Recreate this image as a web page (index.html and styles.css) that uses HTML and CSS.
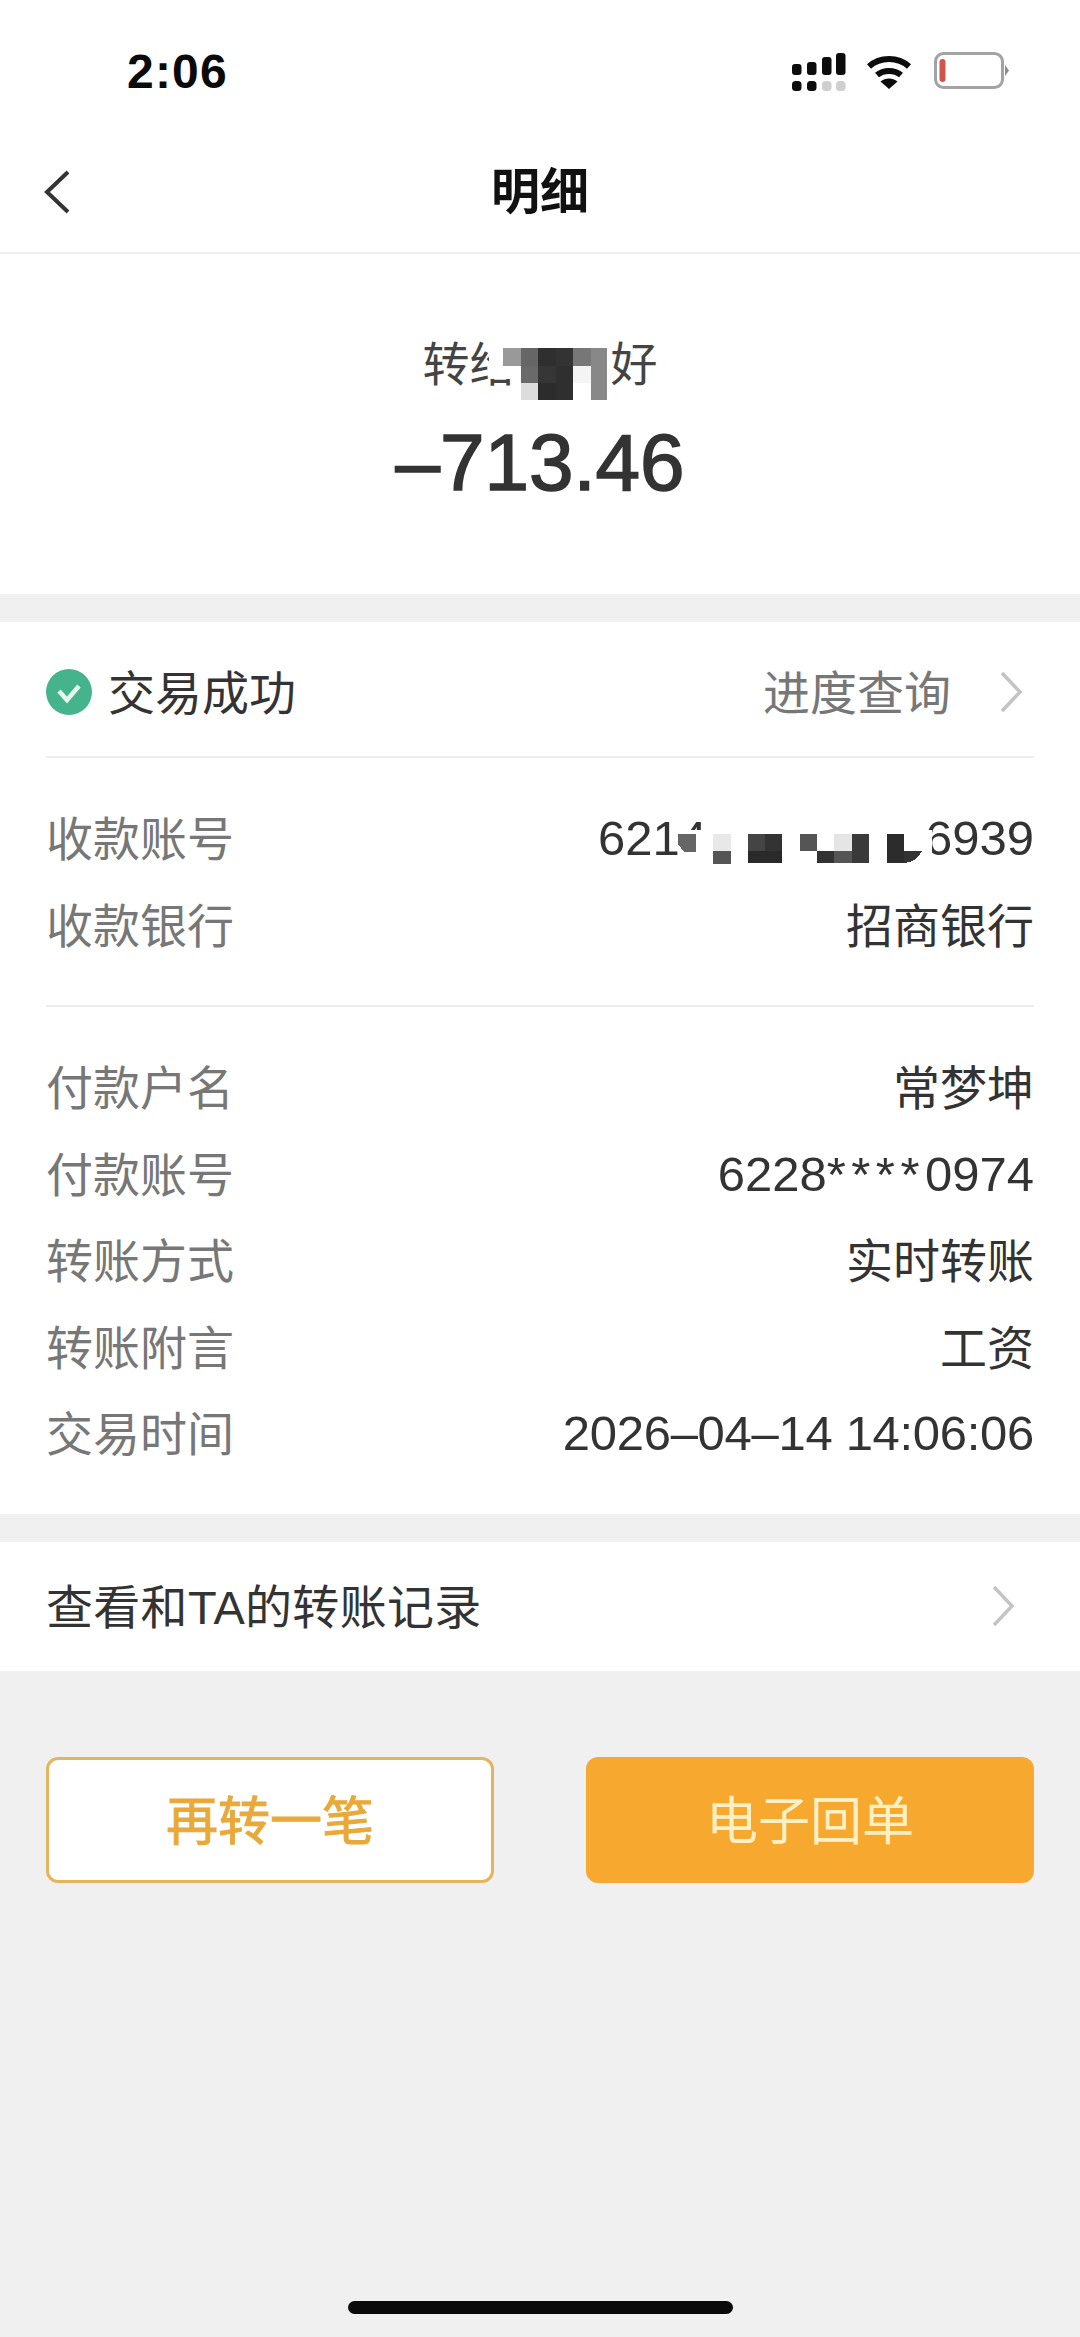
FILE: index.html
```html
<!DOCTYPE html>
<html lang="zh-CN">
<head>
<meta charset="utf-8">
<title>明细</title>
<link rel="stylesheet" href="styles.css">
</head>
<body>
<div class="page">
  <div class="top">
    <div class="status">
      <span class="time">2:06</span>
      <div class="status-icons">
        <svg class="signal" width="54" height="39" viewBox="0 0 54 39">
          <rect x="0" y="11" width="9.500" height="11" rx="3" fill="#0c0c0c"/>
          <rect x="15" y="9" width="9.500" height="13" rx="3" fill="#0c0c0c"/>
          <rect x="30" y="4" width="9.500" height="18" rx="3" fill="#0c0c0c"/>
          <rect x="44" y="0" width="9.500" height="22" rx="3" fill="#0c0c0c"/>
          <rect x="0" y="28" width="9.500" height="10" rx="3.500" fill="#0c0c0c"/>
          <rect x="15" y="28" width="9.500" height="10" rx="3.500" fill="#0c0c0c"/>
          <rect x="30" y="28" width="9.500" height="10" rx="3.500" fill="#cfcfcf"/>
          <rect x="44" y="28" width="9.500" height="10" rx="3.500" fill="#cfcfcf"/>
        </svg>
        <svg class="wifi" width="46" height="34" viewBox="0 0 46 34">
          <path d="M3 11.500C14 1.500 32 1.500 43 11.500" fill="none" stroke="#0c0c0c" stroke-width="6"/>
          <path d="M11 20C17.500 14.500 28.500 14.500 35 20" fill="none" stroke="#0c0c0c" stroke-width="6"/>
          <path d="M14.500 26.500C19.500 22.500 26.500 22.500 31.500 26.500L23 34Z" fill="#0c0c0c"/>
        </svg>
        <svg class="battery" width="76" height="37" viewBox="0 0 76 37">
          <rect x="1.500" y="1.500" width="67" height="34" rx="8" fill="#fff" stroke="#a3a3a3" stroke-width="3"/>
          <rect x="5.500" y="7" width="6" height="23" rx="3" fill="#d0564c"/>
          <path d="M71 13L75 18.500L71 24Z" fill="#8c8c8c"/>
        </svg>
      </div>
    </div>
    <header class="nav">
      <svg class="back" width="28" height="44" viewBox="0 0 28 44">
        <path d="M25 2L4 22L25 42" fill="none" stroke="#333" stroke-width="4"/>
      </svg>
      <h1 class="nav-title">明细</h1>
    </header>
    <section class="hero">
      <div class="payee">转给　　好<svg class="mosaic-payee" width="118" height="60" viewBox="0 -8 118 60" shape-rendering="crispEdges">
          <path d="M0 -8H118V52H36L22 31H0Z" fill="#fff"/>
          <rect x="14" y="0" width="18" height="18" fill="#999"/>
          <rect x="32" y="0" width="17" height="18" fill="#666"/>
          <rect x="49" y="0" width="18" height="18" fill="#2f2f2f"/>
          <rect x="67" y="0" width="17" height="18" fill="#333"/>
          <rect x="84" y="0" width="18" height="18" fill="#777"/>
          <rect x="102" y="0" width="16" height="18" fill="#888"/>
          <rect x="32" y="18" width="17" height="17" fill="#6a6a6a"/>
          <rect x="49" y="18" width="18" height="17" fill="#363636"/>
          <rect x="67" y="18" width="17" height="17" fill="#2f2f2f"/>
          <rect x="84" y="18" width="18" height="17" fill="#f4f4f4"/>
          <rect x="102" y="18" width="16" height="17" fill="#888"/>
          <rect x="32" y="35" width="17" height="17" fill="#ddd"/>
          <rect x="49" y="35" width="18" height="17" fill="#2c2c2c"/>
          <rect x="67" y="35" width="17" height="17" fill="#2f2f2f"/>
          <rect x="102" y="35" width="16" height="17" fill="#888"/>
        </svg></div>
      <div class="amount">–713.46</div>
    </section>
  </div>

  <section class="card">
    <div class="state-row">
      <div class="state-left">
        <svg class="ok" width="46" height="46" viewBox="0 0 46 46">
          <circle cx="23" cy="23" r="23" fill="#45b48c"/>
          <path d="M13 22L21 31L33 17" fill="none" stroke="#e6f7ef" stroke-width="4.500"/>
        </svg>
        <span class="label-shift state-text">交易成功</span>
      </div>
      <div class="state-right">
        <span class="label-shift state-link">进度查询</span>
        <svg class="chev" width="24" height="42" viewBox="0 0 24 42">
          <path d="M3 2L21 21L3 40" fill="none" stroke="#c4c4c4" stroke-width="3.500"/>
        </svg>
      </div>
    </div>
    <div class="group">
      <div class="row"><span class="label-shift label">收款账号</span><span class="number masked">6214<span class="gap"></span>6939<svg class="mosaic-card" width="254" height="34" viewBox="0 0 254 34" shape-rendering="crispEdges">
          <rect width="254" height="34" fill="#fff"/>
          <path d="M0 4H18V22H6L0 14Z" fill="#666"/>
          <rect x="35" y="4" width="18" height="17" fill="#e8e8e8"/>
          <rect x="35" y="21" width="18" height="13" fill="#555"/>
          <rect x="70" y="4" width="17" height="17" fill="#444"/>
          <rect x="87" y="4" width="17" height="17" fill="#333"/>
          <rect x="70" y="21" width="34" height="12" fill="#2a2a2a"/>
          <rect x="122" y="4" width="17" height="17" fill="#555"/>
          <rect x="139" y="21" width="17" height="12" fill="#333"/>
          <rect x="156" y="4" width="18" height="17" fill="#e5e5e5"/>
          <rect x="156" y="21" width="18" height="12" fill="#555"/>
          <rect x="174" y="4" width="17" height="29" fill="#3a3a3a"/>
          <rect x="209" y="4" width="17" height="29" fill="#2c2c2c"/>
          <path d="M226 21H244C240 28 234 33 226 33Z" fill="#333"/>
        </svg></span></div>
      <div class="row"><span class="label-shift label">收款银行</span><span class="label-shift value">招商银行</span></div>
    </div>
    <div class="group">
      <div class="row"><span class="label-shift label">付款户名</span><span class="label-shift value">常梦坤</span></div>
      <div class="row"><span class="label-shift label">付款账号</span><span class="number">6228<span class="stars">****</span>0974</span></div>
      <div class="row"><span class="label-shift label">转账方式</span><span class="label-shift value">实时转账</span></div>
      <div class="row"><span class="label-shift label">转账附言</span><span class="label-shift value">工资</span></div>
      <div class="row"><span class="label-shift label">交易时间</span><span class="number number-date">2026–04–14 14:06:06</span></div>
    </div>
  </section>

  <section class="history">
    <span class="label-shift history-text">查看和TA的转账记录</span>
    <svg class="chev" width="24" height="42" viewBox="0 0 24 42">
      <path d="M3 2L21 21L3 40" fill="none" stroke="#c4c4c4" stroke-width="3.500"/>
    </svg>
  </section>

  <div class="actions">
    <button class="btn btn-outline">再转一笔</button>
    <button class="btn btn-solid">电子回单</button>
  </div>

  <div class="home-indicator"></div>
</div>
</body>
</html>
```

FILE: styles.css
```css
* { box-sizing: border-box; }
html, body { margin: 0; padding: 0; }
body {
  width: 1080px;
  height: 2337px;
  background: #f0f0f0;
  font-family: "Liberation Sans", "Noto Sans CJK SC", sans-serif;
  color: #333;
  overflow: hidden;
}
.page {
  display: flex;
  flex-direction: column;
  height: 100%;
}
.top { background: #fff; }
.status {
  height: 130px;
  display: flex;
  justify-content: space-between;
  padding: 52px 70px 0 127px;
}
.time {
  font-size: 48px;
  font-weight: 700;
  line-height: 40px;
  color: #0a0a0a;
  letter-spacing: 1.200px;
}
.status-icons {
  display: flex;
  align-items: flex-start;
}
.signal { margin-top: 1px; margin-right: 20px; }
.wifi { margin-top: 3px; margin-right: 22px; }
.nav {
  height: 124px;
  display: flex;
  align-items: center;
  justify-content: center;
  position: relative;
  border-bottom: 2px solid #efefef;
}
.back { position: absolute; left: 43px; top: 40px; }
.nav-title {
  margin: 0 0 8px;
  font-size: 49px;
  font-weight: 700;
  color: #111;
}
.hero {
  height: 340px;
  padding-top: 81px;
  display: flex;
  flex-direction: column;
  align-items: center;
}
.payee {
  position: relative;
  font-size: 47px;
  line-height: 60px;
  height: 60px;
  color: #444;
}
.mosaic-payee { position: absolute; left: 66px; top: 5px; }
.amount {
  font-size: 80px;
  line-height: 100px;
  height: 100px;
  margin-top: 18px;
  color: #333;
  -webkit-text-stroke: 1.600px #333;
}
.card {
  margin-top: 28px;
  background: #fff;
  padding: 0 46px;
}
.state-row {
  height: 134px;
  padding-top: 6px;
  display: flex;
  align-items: center;
  justify-content: space-between;
  font-size: 47px;
}
.state-left, .state-right { display: flex; align-items: center; }
.ok { margin-right: 16px; }
.state-text { color: #333; }
.state-link { color: #777; }
.state-right .chev { margin-left: 48px; margin-right: 11px; }
.group {
  border-top: 2px solid #ededed;
  padding: 37px 0;
}
.row {
  height: 86.500px;
  display: flex;
  align-items: center;
  justify-content: space-between;
  font-size: 47px;
}
.label-shift { padding-bottom: 5px; }
.label { color: #777; }
.value { color: #333; }
.number {
  color: #333;
  font-size: 49px;
  white-space: nowrap;
}
.number-date { letter-spacing: -0.300px; }
.masked {
  position: relative;
  display: flex;
  align-items: center;
}
.gap { width: 218px; }
.mosaic-card {
  position: absolute;
  right: 102px;
  top: 20px;
}
.stars { letter-spacing: 5.500px; }
.history {
  margin-top: 28px;
  height: 129px;
  background: #fff;
  padding: 0 65px 0 46px;
  display: flex;
  align-items: center;
  justify-content: space-between;
  font-size: 47px;
  color: #333;
}
.history-text { letter-spacing: 0.300px; }
.actions {
  margin-top: 86px;
  padding: 0 46px;
  display: flex;
  justify-content: space-between;
}
.btn {
  width: 448px;
  height: 126px;
  border-radius: 12px;
  font-family: inherit;
  font-size: 52px;
  padding: 0 0 4px;
}
.btn-outline {
  background: #fff;
  border: 3px solid #e5b45e;
  color: #e9a93a;
  -webkit-text-stroke: 1px #e9a93a;
}
.btn-solid {
  background: #f6a82f;
  border: 0;
  color: #fdf0c4;
}
.home-indicator {
  margin-top: auto;
  margin-bottom: 23px;
  margin-left: auto;
  margin-right: auto;
  width: 385px;
  height: 13px;
  border-radius: 7px;
  background: #0a0a0a;
}
```
